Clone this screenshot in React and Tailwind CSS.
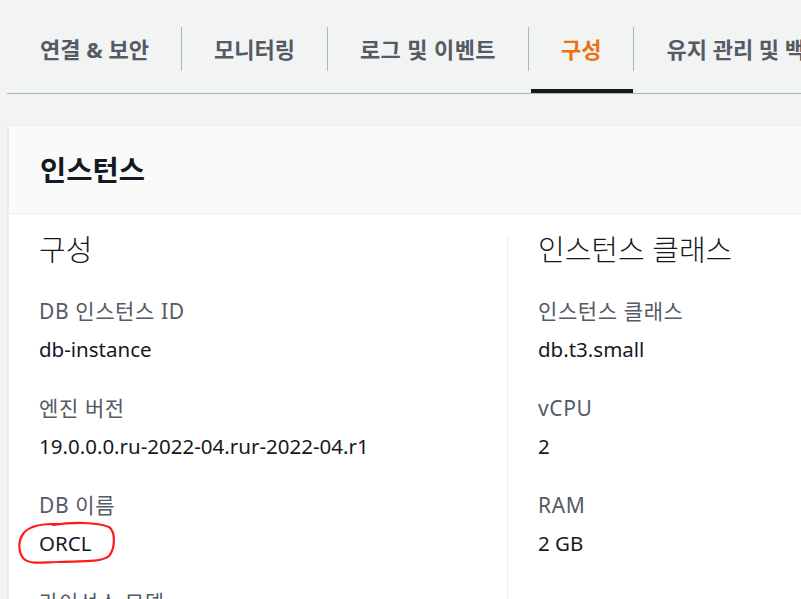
import React from "react";

const font = { fontFamily: '"Noto Sans", "Noto Sans CJK KR", sans-serif' };

const tabs = [
  { label: "연결 & 보안" },
  { label: "모니터링" },
  { label: "로그 및 이벤트" },
  { label: "구성", active: true },
  { label: "유지 관리 및 백업" },
];

function Field({ label, value, first, children }) {
  return (
    <div className={first ? "mt-[31px]" : "mt-[35px]"}>
      <div className="whitespace-nowrap text-[21px] leading-[24px] tracking-[0.6px] text-[#545b64]">{label}</div>
      <div className="relative mt-[14px] whitespace-nowrap text-[20.5px] leading-[24px] text-[#16191f]">
        {value}
        {children}
      </div>
    </div>
  );
}

export default function App() {
  return (
    <div className="h-[599px] w-[801px] overflow-hidden bg-[#f2f3f3]" style={font}>
      <div className="pl-[7px]">
        <div className="flex h-[94px] border-b border-[#aab7b8] whitespace-nowrap">
          {tabs.map((t, i) => (
            <div key={i} className="relative flex flex-col">
              <div
                className={
                  "mt-[27px] flex h-[44px] items-center px-[32px] text-[22px] font-bold " +
                  (i > 0 ? "border-l border-[#aab7b8] " : "ml-[1px] ") +
                  (i === 2 ? "tracking-[0.4px] " : "") +
                  (t.active ? "text-[#ec7211]" : "text-[#545b64]")
                }
              >
                {t.label}
              </div>
              {t.active && (
                <div className="absolute bottom-[0px] left-[3px] right-[0px] h-[4px] bg-[#16191f]" />
              )}
            </div>
          ))}
        </div>
      </div>

      <div className="ml-[8px] mt-[31px] w-[820px] border-l border-t border-[#eaeded] bg-white shadow-[0_1px_1px_rgba(0,28,36,0.3)]">
        <div className="flex h-[88px] items-center border-b border-[#eaeded] bg-[#fafafa] pl-[31px]">
          <h2 className="text-[28.5px] font-bold leading-[36px] text-[#16191f]">인스턴스</h2>
        </div>
        <div className="flex">
          <div className="w-[498px] pl-[30px] pt-[18px]">
            <div className="text-[29px] font-light leading-[36px] text-[#16191f]">구성</div>
            <Field first label="DB 인스턴스 ID" value="db-instance" />
            <Field label="엔진 버전" value="19.0.0.0.ru-2022-04.rur-2022-04.r1" />
            <Field label="DB 이름" value="ORCL">
              <svg
                className="pointer-events-none absolute left-[-22px] top-[-10px]"
                width="100"
                height="48"
                viewBox="0 0 100 48"
                fill="none"
              >
                <path
                  d="M36 4 C55 1 80 1 92 6 C99 11 98 28 92 35 C84 42 60 40 40 41 C28 41 14 44 7 38 C1 32 1 20 6 13 C11 6 22 3 36 3 L44 3"
                  stroke="#ff1a1a"
                  strokeWidth="2.2"
                  strokeLinecap="round"
                />
              </svg>
            </Field>
            <Field label="라이선스 모델" value="Bring Your Own License" />
          </div>
          <div className="mt-[23px] border-l border-[#eaeded] pl-[30px]">
            <div className="-mt-[5px] whitespace-nowrap text-[29px] font-light leading-[36px] text-[#16191f]">인스턴스 클래스</div>
            <Field first label="인스턴스 클래스" value="db.t3.small" />
            <Field label="vCPU" value="2" />
            <Field label="RAM" value="2 GB" />
            <div className="h-[200px]" />
          </div>
        </div>
      </div>
    </div>
  );
}
